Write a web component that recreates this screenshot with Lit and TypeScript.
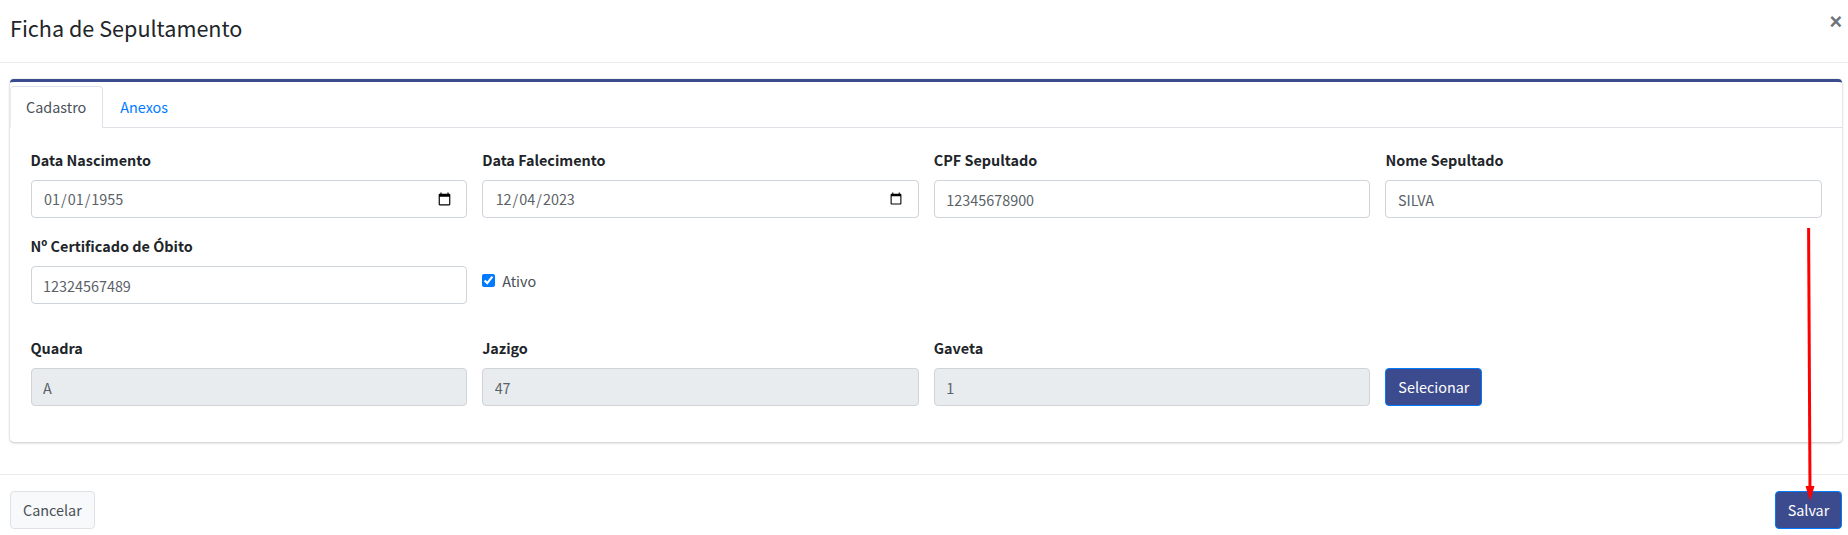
import { LitElement, html, css } from "lit";
import { customElement } from "lit/decorators.js";

@customElement("app-root")
export class AppRoot extends LitElement {
  static styles = css`
    :host { display: block; position: relative; width: 1848px; height: 535px; background: #fff; overflow: hidden;
      font-family: "Noto Sans CJK SC", "Source Sans Pro", sans-serif; font-size: 14.4px; line-height: 24px; color: #212529; }
    * { box-sizing: border-box; }
    .header { height: 63px; border-bottom: 1px solid #e9ecef; display: flex; justify-content: space-between; padding: 0 6px 0 10px; }
    .title { margin: 0; font-size: 21.6px; font-weight: 400; line-height: 30px; padding-top: 13px; color: #212529; }
    .close { font-family: "Liberation Sans", sans-serif; font-size: 21.6px; font-weight: 700; color: #6c757d; line-height: 20px; padding-top: 12px; }
    .main { padding: 16px 6px 0 10px; height: 412px; border-bottom: 1px solid #e9ecef; }
    .card { height: 363px; border-top: 3px solid #3c4b8e; border-radius: 4px; box-shadow: 0 0 1px rgba(0,0,0,.25), 0 1px 3px rgba(0,0,0,.2); background: #fff; }
    .tabs { display: flex; height: 46px; padding-top: 4px; border-bottom: 1px solid #dee2e6; }
    .tab { padding: 9px 16px 0 17px; height: 42px; margin-bottom: -1px; color: #007bff; }
    .tab.active { color: #495057; background: #fff; border: 1px solid #dee2e6; border-bottom-color: #fff; border-radius: 4px 4px 0 0; padding-left: 15px; padding-right: 16px; padding-top: 8px; border-left-color:#e9ecef; }
    .body { padding: 21px 20px 0 20.5px; }
    .row { display: grid; grid-template-columns: repeat(4, 1fr); gap: 15px; }
    .row.r1 { margin-bottom: 17px; }
    .row.r2 { margin-bottom: 33px; }
    label { display: block; font-weight: 700; margin-bottom: 7px; height: 24px; line-height: 22px; }
    input.ctl { display: block; width: 100%; height: 38px; padding: 6px 11.5px; border: 1px solid #ced4da; border-radius: 4px;
      font: inherit; color: #5a6268; background: #fff; outline: none; }
    input.ctl[type="date"] { padding-right: 12.5px; }
    input.ctl[readonly] { background: #e9ecef; }
    .check { display: flex; align-items: center; gap: 7px; color: #495057; padding-top: 22px; height: 69px; }
    .check input { width: 13px; height: 13px; margin: 0; accent-color: #007bff; }
    .btn { display: inline-block; height: 38px; padding: 6px 12px; border-radius: 4px; font: inherit; }
    .primary { background: #3c4b8e; border: 1px solid #007bff; color: #fff; }
    .light { background: #f8f9fa; border: 1px solid #dee2e6; color: #495057; }
    .sel { margin-top: 31px; width: 97px; align-self: start; padding: 6px 0; text-align: center; }
    .save { width: 67px; padding: 6px 0; text-align: center; }
    .footer { display: flex; justify-content: space-between; padding: 16px 6px 0 10px; }
    .arrow { position: absolute; left: 1800px; top: 226px; width: 20px; height: 280px; }
  `;

  render() {
    return html`
      <div class="header">
        <h5 class="title">Ficha de Sepultamento</h5>
        <span class="close">×</span>
      </div>
      <div class="main">
        <div class="card">
          <div class="tabs">
            <div class="tab active">Cadastro</div>
            <div class="tab">Anexos</div>
          </div>
          <div class="body">
            <div class="row r1">
              <div><label>Data Nascimento</label><input class="ctl" type="date" value="1955-01-01" /></div>
              <div><label>Data Falecimento</label><input class="ctl" type="date" value="2023-12-04" /></div>
              <div><label>CPF Sepultado</label><input class="ctl" value="12345678900" /></div>
              <div><label>Nome Sepultado</label><input class="ctl" value="SILVA" /></div>
            </div>
            <div class="row r2">
              <div><label>Nº Certificado de Óbito</label><input class="ctl" value="12324567489" /></div>
              <div class="check"><input type="checkbox" checked /><span>Ativo</span></div>
            </div>
            <div class="row">
              <div><label>Quadra</label><input class="ctl" readonly value="A" /></div>
              <div><label>Jazigo</label><input class="ctl" readonly value="47" /></div>
              <div><label>Gaveta</label><input class="ctl" readonly value="1" /></div>
              <button class="btn primary sel">Selecionar</button>
            </div>
          </div>
        </div>
      </div>
      <div class="footer">
        <button class="btn light">Cancelar</button>
        <button class="btn primary save">Salvar</button>
      </div>
      <svg class="arrow" viewBox="0 0 20 280">
        <path d="M8.6 2 L10 264" stroke="#ff0000" stroke-width="3" fill="none" />
        <path d="M5.5 260 L14.5 260 L10.2 275 Z" fill="#ff0000" />
      </svg>
    `;
  }
}
